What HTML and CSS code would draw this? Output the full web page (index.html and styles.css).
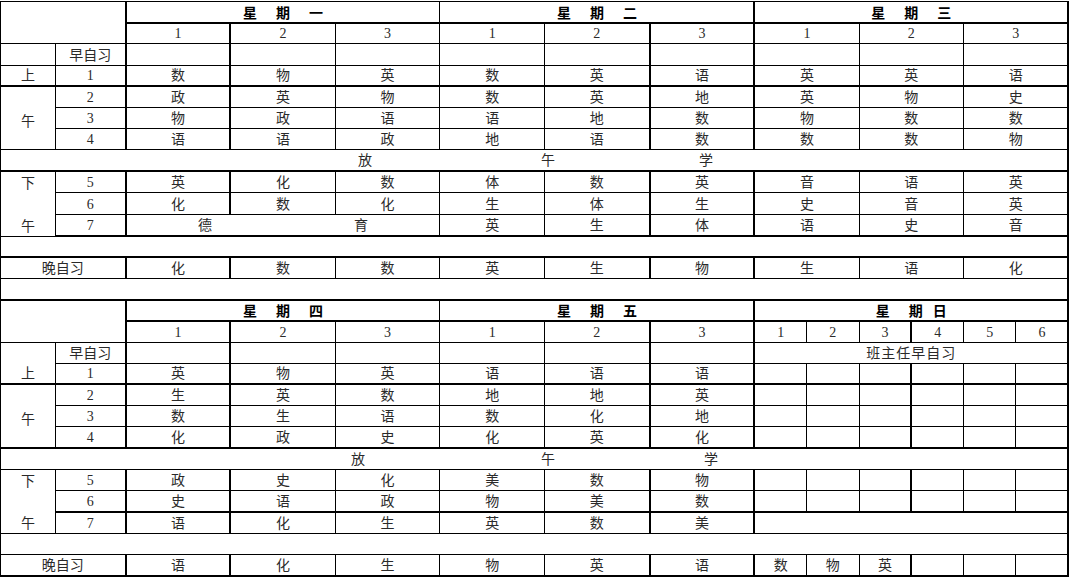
FILE: index.html
```html
<!DOCTYPE html>
<html lang="zh-CN">
<head>
<meta charset="utf-8">
<title>课程表</title>
<link rel="stylesheet" href="styles.css">
</head>
<body>
<table class="tt">
  <colgroup>
    <col class="w0"><col class="w1">
    <col class="wb tk"><col class="wb tk"><col class="wb"><col class="wb"><col class="wb"><col class="wb tk">
    <col class="ws tk"><col class="ws"><col class="ws"><col class="ws tk"><col class="ws"><col class="ws">
  </colgroup>
  <tbody>
    <tr>
      <td colspan="2" rowspan="2"></td>
      <td colspan="3" class="hd">星<i class="g"></i>期<i class="g"></i>一</td>
      <td colspan="3" class="hd">星<i class="g"></i>期<i class="g"></i>二</td>
      <td colspan="6" class="hd">星<i class="g"></i>期<i class="g"></i>三</td>
    </tr>
    <tr class="t">
      <td>1</td><td>2</td><td>3</td><td>1</td><td>2</td><td>3</td>
      <td colspan="2">1</td><td colspan="2">2</td><td colspan="2">3</td>
    </tr>
    <tr>
      <td></td><td>早自习</td>
      <td></td><td></td><td></td><td></td><td></td><td></td>
      <td colspan="2"></td><td colspan="2"></td><td colspan="2"></td>
    </tr>
    <tr>
      <td>上</td><td>1</td>
      <td>数</td><td>物</td><td>英</td><td>数</td><td>英</td><td>语</td>
      <td colspan="2">英</td><td colspan="2">英</td><td colspan="2">语</td>
    </tr>
    <tr class="t">
      <td rowspan="3" class="mid">午</td><td>2</td>
      <td>政</td><td>英</td><td>物</td><td>数</td><td>英</td><td>地</td>
      <td colspan="2">英</td><td colspan="2">物</td><td colspan="2">史</td>
    </tr>
    <tr>
      <td>3</td>
      <td>物</td><td>政</td><td>语</td><td>语</td><td>地</td><td>数</td>
      <td colspan="2">物</td><td colspan="2">数</td><td colspan="2">数</td>
    </tr>
    <tr>
      <td>4</td>
      <td>语</td><td>语</td><td>政</td><td>地</td><td>语</td><td>数</td>
      <td colspan="2">数</td><td colspan="2">数</td><td colspan="2">物</td>
    </tr>
    <tr>
      <td colspan="14" class="noon noon-a"><span>放</span><span>午</span><span>学</span></td>
    </tr>
    <tr class="t">
      <td rowspan="3" class="split"><div class="ln">下</div><div class="ln"></div><div class="ln">午</div></td><td>5</td>
      <td>英</td><td>化</td><td>数</td><td>体</td><td>数</td><td>英</td>
      <td colspan="2">音</td><td colspan="2">语</td><td colspan="2">英</td>
    </tr>
    <tr>
      <td>6</td>
      <td>化</td><td>数</td><td>化</td><td>生</td><td>体</td><td>生</td>
      <td colspan="2">史</td><td colspan="2">音</td><td colspan="2">英</td>
    </tr>
    <tr class="bt">
      <td>7</td>
      <td colspan="3">德<i class="gd"></i>育</td><td>英</td><td>生</td><td>体</td>
      <td colspan="2">语</td><td colspan="2">史</td><td colspan="2">音</td>
    </tr>
    <tr>
      <td colspan="14"></td>
    </tr>
    <tr class="t">
      <td colspan="2">晚自习</td>
      <td>化</td><td>数</td><td>数</td><td>英</td><td>生</td><td>物</td>
      <td colspan="2">生</td><td colspan="2">语</td><td colspan="2">化</td>
    </tr>
    <tr>
      <td colspan="14"></td>
    </tr>

    <tr class="t">
      <td colspan="2" rowspan="2"></td>
      <td colspan="3" class="hd">星<i class="g"></i>期<i class="g"></i>四</td>
      <td colspan="3" class="hd">星<i class="g"></i>期<i class="g"></i>五</td>
      <td colspan="6" class="hd">星<i class="g"></i>期<i class="g gs"></i>日</td>
    </tr>
    <tr class="t">
      <td>1</td><td>2</td><td>3</td><td>1</td><td>2</td><td>3</td>
      <td>1</td><td>2</td><td>3</td><td>4</td><td>5</td><td>6</td>
    </tr>
    <tr>
      <td rowspan="2">上</td><td>早自习</td>
      <td></td><td></td><td></td><td></td><td></td><td></td>
      <td colspan="6" class="spaced">班主任早自习</td>
    </tr>
    <tr>
      <td>1</td>
      <td>英</td><td>物</td><td>英</td><td>语</td><td>语</td><td>语</td>
      <td></td><td></td><td></td><td></td><td></td><td></td>
    </tr>
    <tr class="t">
      <td rowspan="3" class="mid">午</td><td>2</td>
      <td>生</td><td>英</td><td>数</td><td>地</td><td>地</td><td>英</td>
      <td></td><td></td><td></td><td></td><td></td><td></td>
    </tr>
    <tr>
      <td>3</td>
      <td>数</td><td>生</td><td>语</td><td>数</td><td>化</td><td>地</td>
      <td></td><td></td><td></td><td></td><td></td><td></td>
    </tr>
    <tr>
      <td>4</td>
      <td>化</td><td>政</td><td>史</td><td>化</td><td>英</td><td>化</td>
      <td></td><td></td><td></td><td></td><td></td><td></td>
    </tr>
    <tr class="t">
      <td colspan="14" class="noon noon-b"><span>放</span><span>午</span><span>学</span></td>
    </tr>
    <tr>
      <td rowspan="3" class="split"><div class="ln">下</div><div class="ln"></div><div class="ln">午</div></td><td>5</td>
      <td>政</td><td>史</td><td>化</td><td>美</td><td>数</td><td>物</td>
      <td></td><td></td><td></td><td></td><td></td><td></td>
    </tr>
    <tr>
      <td>6</td>
      <td>史</td><td>语</td><td>政</td><td>物</td><td>美</td><td>数</td>
      <td></td><td></td><td></td><td></td><td></td><td></td>
    </tr>
    <tr class="t">
      <td>7</td>
      <td>语</td><td>化</td><td>生</td><td>英</td><td>数</td><td>美</td>
      <td colspan="6"></td>
    </tr>
    <tr>
      <td colspan="14"></td>
    </tr>
    <tr>
      <td colspan="2">晚自习</td>
      <td>语</td><td>化</td><td>生</td><td>物</td><td>英</td><td>语</td>
      <td>数</td><td>物</td><td>英</td><td></td><td></td><td></td>
    </tr>
  </tbody>
</table>
</body>
</html>
```

FILE: styles.css
```css
html, body {
  margin: 0;
  padding: 0;
  background: #ffffff;
}

.tt {
  border-collapse: collapse;
  table-layout: fixed;
  width: 1068px;
  margin-top: 1px;
  font-family: "Liberation Serif", "Noto Sans CJK SC", serif;
  font-size: 14px;
  color: #2a2a2a;
  border-right: 2px solid #000;
  border-bottom: 2px solid #000;
}

.w0 { width: 55px; }
.w1 { width: 70px; }
.wb { width: 104.8px; }
.ws { width: 52.33px; }
.tk { border-left: 2px solid #000; }

.tt tr {
  height: 21.2px;
}

.tt td {
  border: 1px solid #000;
  padding: 0 0 2px 0;
  line-height: 15px;
  text-align: center;
  vertical-align: bottom;
  white-space: nowrap;
  overflow: hidden;
}

.tt tr.t > td {
  border-top: 2px solid #000;
}

.tt tr.bt > td {
  border-bottom: 2px solid #000;
}

.tt td.hd {
  font-weight: bold;
  color: #000;
  padding-bottom: 1px;
}

.g {
  display: inline-block;
  width: 19px;
}

.gs {
  width: 10px;
}

.gd {
  display: inline-block;
  width: 142px;
}

.tt td.mid {
  vertical-align: middle;
  padding: 6px 0 0 0;
}

.tt td.split {
  padding: 0;
  vertical-align: top;
}

.ln {
  height: 21.2px;
  display: flex;
  align-items: flex-end;
  justify-content: center;
  padding-bottom: 2px;
  box-sizing: border-box;
}

.tt td.noon {
  text-align: left;
}

.noon span {
  display: inline-block;
  width: 14px;
}

.noon-a span:nth-child(1) { margin-left: 357px; }
.noon-a span:nth-child(2) { margin-left: 169px; }
.noon-a span:nth-child(3) { margin-left: 144px; }

.noon-b span:nth-child(1) { margin-left: 350px; }
.noon-b span:nth-child(2) { margin-left: 176px; }
.noon-b span:nth-child(3) { margin-left: 149px; }

.spaced {
  letter-spacing: 1px;
}
```
